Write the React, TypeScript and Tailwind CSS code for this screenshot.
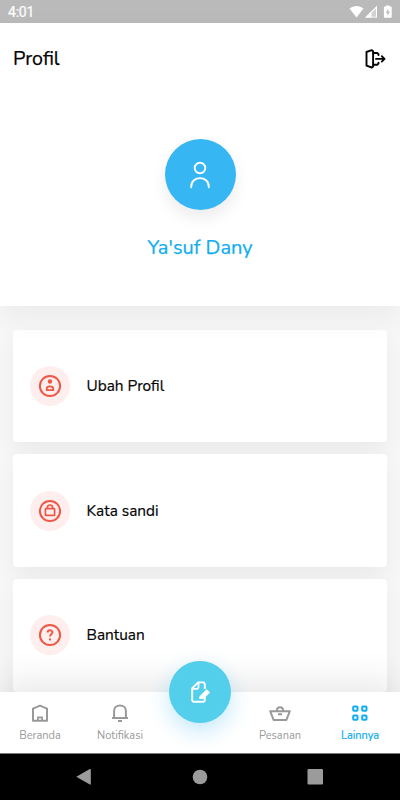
import React from "react";

function StatusBar() {
  return (
    <div className="flex h-[23px] shrink-0 items-center justify-between bg-[#bababa] pl-2 pr-[7px] text-white">
      <span className="pt-[2px] font-['Roboto',sans-serif] text-[14px] leading-[21px] tracking-[-0.2px] [-webkit-text-stroke:0.2px_white]">4:01</span>
      <svg className="ml-auto" width="44" height="14" viewBox="0 0 44 14" fill="currentColor">
        <path d="M0.5 3.6C4.8 0.1 10.2 0.1 14.5 3.6L7.5 12.6Z" />
        <path d="M28 0.8V12.6H16.2Z" opacity="0.35" />
        <path d="M22.2 6.6V12.6H16.2Z" />
        <path fillRule="evenodd" d="M28 0.8V12.6H16.2ZM27 3.2L22.3 7.9V11.8H27Z" />
        <path fillRule="evenodd" d="M37 0.4h3.6v1.2h1.2a.9.9 0 0 1 .9.9v9.4a.9.9 0 0 1-.9.9h-6a.9.9 0 0 1-.9-.9V2.500a.9.9 0 0 1 .9-.9H37zM39.400 3.800l-2.700 4h1.700v3l2.600-4h-1.600z" />
      </svg>
    </div>
  );
}

function LogoutIcon() {
  return (
    <svg width="22" height="22" viewBox="0 0 22 22" fill="none" stroke="#050505" strokeWidth="1.900" strokeLinejoin="round" strokeLinecap="round">
      <path d="M2.500 4L7.800 2.200L9.100 3.200V18.500L7.800 19.500L2.500 17.700Z" />
      <path d="M9.500 5H13.200L14.500 6.200V7M9.500 16.800H13.200L14.500 15.600V14.600" />
      <path d="M12 10.900H20.500M17.800 8.200L20.500 10.900L17.800 13.600" />
    </svg>
  );
}

function ProfileIcon() {
  return (
    <svg width="24" height="24" viewBox="0 0 24 24" fill="none" stroke="#ef5845" strokeWidth="2">
      <circle cx="12" cy="12" r="10.100" />
      <circle cx="12" cy="7.500" r="2.200" fill="#ef5845" stroke="none" />
      <path d="M8.700 16.200V14.900C8.700 11.500 15.300 11.500 15.300 14.900V16.200Z" strokeWidth="1.800" strokeLinejoin="round" />
    </svg>
  );
}

function LockIcon() {
  return (
    <svg width="24" height="24" viewBox="0 0 24 24" fill="none" stroke="#ef5845" strokeWidth="2">
      <circle cx="12" cy="12" r="10.100" />
      <rect x="7.400" y="9.700" width="9.200" height="6.700" rx="0.500" strokeWidth="1.700" />
      <path d="M9.400 9.500V8.400C9.400 5.200 14.600 5.200 14.600 8.400V9.500" strokeWidth="1.700" />
    </svg>
  );
}

function HelpIcon() {
  return (
    <svg width="24" height="24" viewBox="0 0 24 24" fill="none" stroke="#ef5845" strokeWidth="2">
      <circle cx="12" cy="12" r="10.100" />
      <path d="M9.700 9.500C9.700 6.500 14.400 6.500 14.400 9.300C14.400 11.200 12 11.300 12 13.600" strokeWidth="2" />
      <rect x="11" y="15.400" width="2" height="2" fill="#ef5845" stroke="none" />
    </svg>
  );
}

function MenuCard({ icon, label }: { icon: React.ReactNode; label: string }) {
  return (
    <div className="flex h-[112.5px] shrink-0 items-center rounded-[4px] bg-white pl-[17px] shadow-[0_10px_22px_rgba(0,0,0,0.055)]">
      <div className="flex size-10 items-center justify-center rounded-full bg-[#feefee]">{icon}</div>
      <span className="ml-[16.500px] text-[15.400px] leading-5 text-[#050505] [-webkit-text-stroke:0.2px_#050505]">{label}</span>
    </div>
  );
}

function HomeIcon() {
  return (
    <svg width="24" height="24" viewBox="0 0 24 24" fill="none" stroke="#999999" strokeWidth="2" strokeLinejoin="round">
      <path d="M5 7.600L12 4.600L19 7.600V19.700H5Z" />
      <path d="M9.900 19.500V16.300H14.100V19.500" strokeWidth="1.800" />
    </svg>
  );
}

function BellIcon() {
  return (
    <svg width="24" height="24" viewBox="0 0 24 24" fill="none" stroke="#999999" strokeWidth="2">
      <path d="M4 17H20M6.100 16.700V9.900C6.100 2.600 17.900 2.600 17.900 9.900V16.700M10 20H14" />
    </svg>
  );
}

function BasketIcon() {
  return (
    <svg width="24" height="24" viewBox="0 0 24 24" fill="none" stroke="#999999" strokeWidth="2" strokeLinejoin="round">
      <path d="M2.200 10.200H21.800L18.400 19H5.600Z" />
      <path d="M8.800 9.800C8.800 4.900 15.200 4.900 15.200 9.800M10 13.300H14" />
    </svg>
  );
}

function GridIcon() {
  return (
    <svg width="24" height="24" viewBox="0 0 24 24" fill="none" stroke="#12aeee" strokeWidth="2">
      <rect x="5.200" y="5.500" width="4.300" height="4.300" rx="0.700" />
      <rect x="14.200" y="5.500" width="4.300" height="4.300" rx="0.700" />
      <rect x="5.200" y="14.500" width="4.300" height="4.300" rx="0.700" />
      <rect x="14.200" y="14.500" width="4.300" height="4.300" rx="0.700" />
    </svg>
  );
}

function NavItem({ icon, label, tone }: { icon: React.ReactNode; label: string; tone: string }) {
  return (
    <div className="flex w-20 flex-col items-center pt-[9px]">
      {icon}
      <span className={"mt-[2px] text-[11px] leading-[17px] whitespace-nowrap " + tone}>{label}</span>
    </div>
  );
}

export default function App() {
  return (
    <div className="flex h-[800px] w-[400px] flex-col overflow-hidden bg-[#f7f7f7] font-['Nunito','Lato',sans-serif]">
      <StatusBar />
      <header className="relative flex h-[283px] shrink-0 flex-col bg-white shadow-[0_12px_30px_rgba(0,0,0,0.05)]">
        <div className="flex h-[72px] items-center justify-between pr-[14px] pl-[13px]">
          <h1 className="text-[19.600px] leading-6 text-[#050505] [-webkit-text-stroke:0.25px_#050505]">Profil</h1>
          <LogoutIcon />
        </div>
        <div className="mt-[44px] flex flex-col items-center">
          <div className="flex size-[71px] items-center justify-center rounded-full bg-[#36b6f2] shadow-[0_8px_16px_rgba(0,0,0,0.08)]">
            <svg width="24" height="30" viewBox="0 0 24 30" fill="none" stroke="white" strokeWidth="1.900" strokeLinecap="round">
              <circle cx="12" cy="8" r="5.300" />
              <path d="M3.200 27.200V26.500C3.200 15.300 20.800 15.300 20.800 26.500V27.200" />
            </svg>
          </div>
          <p className="mt-[26px] text-[20px] leading-6 text-[#12aeee] [-webkit-text-stroke:0.25px_#12aeee]">Ya'suf Dany</p>
        </div>
      </header>
      <main className="flex h-[386px] shrink-0 flex-col gap-[12.300px] overflow-hidden px-[13px] pt-[23.500px]">
        <MenuCard icon={<ProfileIcon />} label="Ubah Profil" />
        <MenuCard icon={<LockIcon />} label="Kata sandi" />
        <MenuCard icon={<HelpIcon />} label="Bantuan" />
      </main>
      <nav className="relative flex h-[61px] shrink-0 justify-between bg-white shadow-[0_-8px_36px_rgba(0,0,0,0.1)]">
        <NavItem icon={<HomeIcon />} label="Beranda" tone="text-[#9a9a9a]" />
        <NavItem icon={<BellIcon />} label="Notifikasi" tone="text-[#9a9a9a]" />
        <div className="flex w-20 justify-center">
          <div className="-mt-[31px] flex size-[62px] items-center justify-center rounded-full bg-[#53cfec] shadow-[0_8px_22px_rgba(54,182,242,0.3)]">
            <svg width="24" height="24" viewBox="0 0 24 24" fill="none" stroke="white" strokeWidth="1.900" strokeLinejoin="round">
              <path d="M16.800 9V4L15.800 2.400H10.200L4.200 8.300V20.700L5.200 21.700H15.800L16.800 20.700V16.500" />
              <path d="M4.200 8.800H9.300L10.500 7.600V2.500" strokeWidth="1.700" />
              <path d="M11.300 19V16.500L18.600 9.300L22.100 12.600L15.500 19Z" fill="white" stroke="none" />
            </svg>
          </div>
        </div>
        <NavItem icon={<BasketIcon />} label="Pesanan" tone="text-[#9a9a9a]" />
        <NavItem icon={<GridIcon />} label="Lainnya" tone="text-[#12aeee] [-webkit-text-stroke:0.2px_#12aeee]" />
      </nav>
      <footer className="relative flex h-[47px] shrink-0 items-center border-t border-[#777] bg-black">
        <svg width="400" height="46" viewBox="0 0 400 46" fill="#9b9b9b">
          <path d="M76.300 22.800L89.800 15Q90.800 14.600 90.800 15.700V30Q90.800 31.100 89.800 30.600Z" />
          <circle cx="200" cy="23" r="7.300" />
          <rect x="307.500" y="15" width="15.500" height="15.500" rx="1" />
        </svg>
      </footer>
    </div>
  );
}
